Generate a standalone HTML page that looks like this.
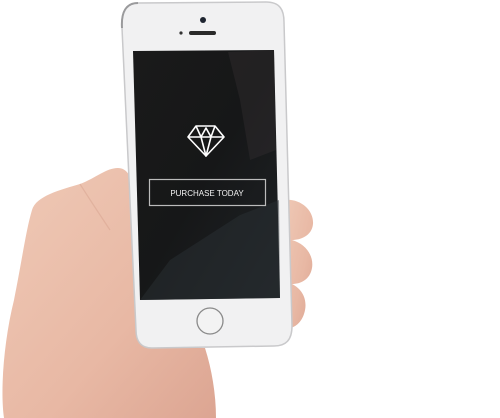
<!DOCTYPE html>
<html><head><style>
html,body{margin:0;padding:0;background:#fff;width:500px;height:418px;overflow:hidden}
svg{display:block}
</style></head><body>
<svg width="500" height="418" viewBox="0 0 500 418" xmlns="http://www.w3.org/2000/svg">
<defs>
<linearGradient id="skin" x1="0" y1="0" x2="1" y2="1">
<stop offset="0" stop-color="#efc9b6"/><stop offset="0.6" stop-color="#e8b8a4"/><stop offset="1" stop-color="#dca592"/>
</linearGradient>
<linearGradient id="scr" x1="0" y1="0" x2="1" y2="1">
<stop offset="0" stop-color="#1a1a1a"/><stop offset="0.5" stop-color="#161718"/><stop offset="1" stop-color="#1f2326"/>
</linearGradient>
</defs>
<!-- right fingers -->
<path d="M284 200 C300 198 314 210 313 224 C312 236 300 240 292 240 C306 244 314 256 312 268 C310 280 300 284 292 284 C304 290 308 302 304 314 C300 326 290 330 284 328 Z" fill="url(#skin)"/>
<!-- hand -->
<path d="M118 168 C128 168 134 180 134 195 L136 250 L142 345 L205 348 C212 370 216 395 216 418 L4 418 C0 390 4 340 14 300 C22 260 26 230 32 210 C36 196 60 190 80 184 C96 178 106 168 118 168 Z" fill="url(#skin)"/>
<path d="M80 184 C90 200 100 215 110 230" stroke="#d29a86" stroke-width="1.2" fill="none" opacity=".4"/>
<!-- phone body -->
<path d="M138 3 L266 2 C280 2 284 10 284 22 L292 326 C292 340 286 346 274 346 L152 348 C140 348 136 340 136 330 L122 28 C121 12 126 3 138 3 Z" fill="#f1f1f2" stroke="#c9c9cb" stroke-width="1.5"/>
<path d="M122 28 C121 12 126 3 138 3" stroke="#9a9a9c" stroke-width="2" fill="none"/>
<!-- screen -->
<path d="M133 51 L274 50 L280 298 L140 300 Z" fill="url(#scr)"/>
<path d="M228 52 L274 50 L276 150 L250 160 L240 100 Z" fill="#3a3436" opacity=".35"/>
<path d="M140 300 L280 298 L279 200 L240 215 L170 260 Z" fill="#2a2f33" opacity=".5"/>
<!-- camera/speaker -->
<circle cx="203" cy="20" r="3" fill="#1e2430"/>
<circle cx="181" cy="33" r="1.6" fill="#333"/>
<rect x="189" y="31" width="27" height="4" rx="2" fill="#2a2a2a"/>
<!-- home -->
<circle cx="210" cy="321" r="13" fill="#f3f3f3" stroke="#8a8a8a" stroke-width="1.3"/>
<!-- diamond -->
<g stroke="#fff" stroke-width="1.6" fill="none" stroke-linejoin="round">
<path d="M196 126 L215 126 L224 137 L206 156 L188 137 Z"/>
<path d="M188 137 L224 137 M196 126 L201 137 L206 156 L211 137 L215 126 M201 137 L206 128 L211 137"/>
</g>
<!-- button -->
<rect x="149.5" y="179.5" width="116" height="26" fill="none" stroke="#bbb" stroke-width="1.2"/>
<text x="207" y="196" font-family="Liberation Sans, sans-serif" font-size="8" fill="#f2f2f2" text-anchor="middle">PURCHASE TODAY</text>
</svg>
</body></html>
